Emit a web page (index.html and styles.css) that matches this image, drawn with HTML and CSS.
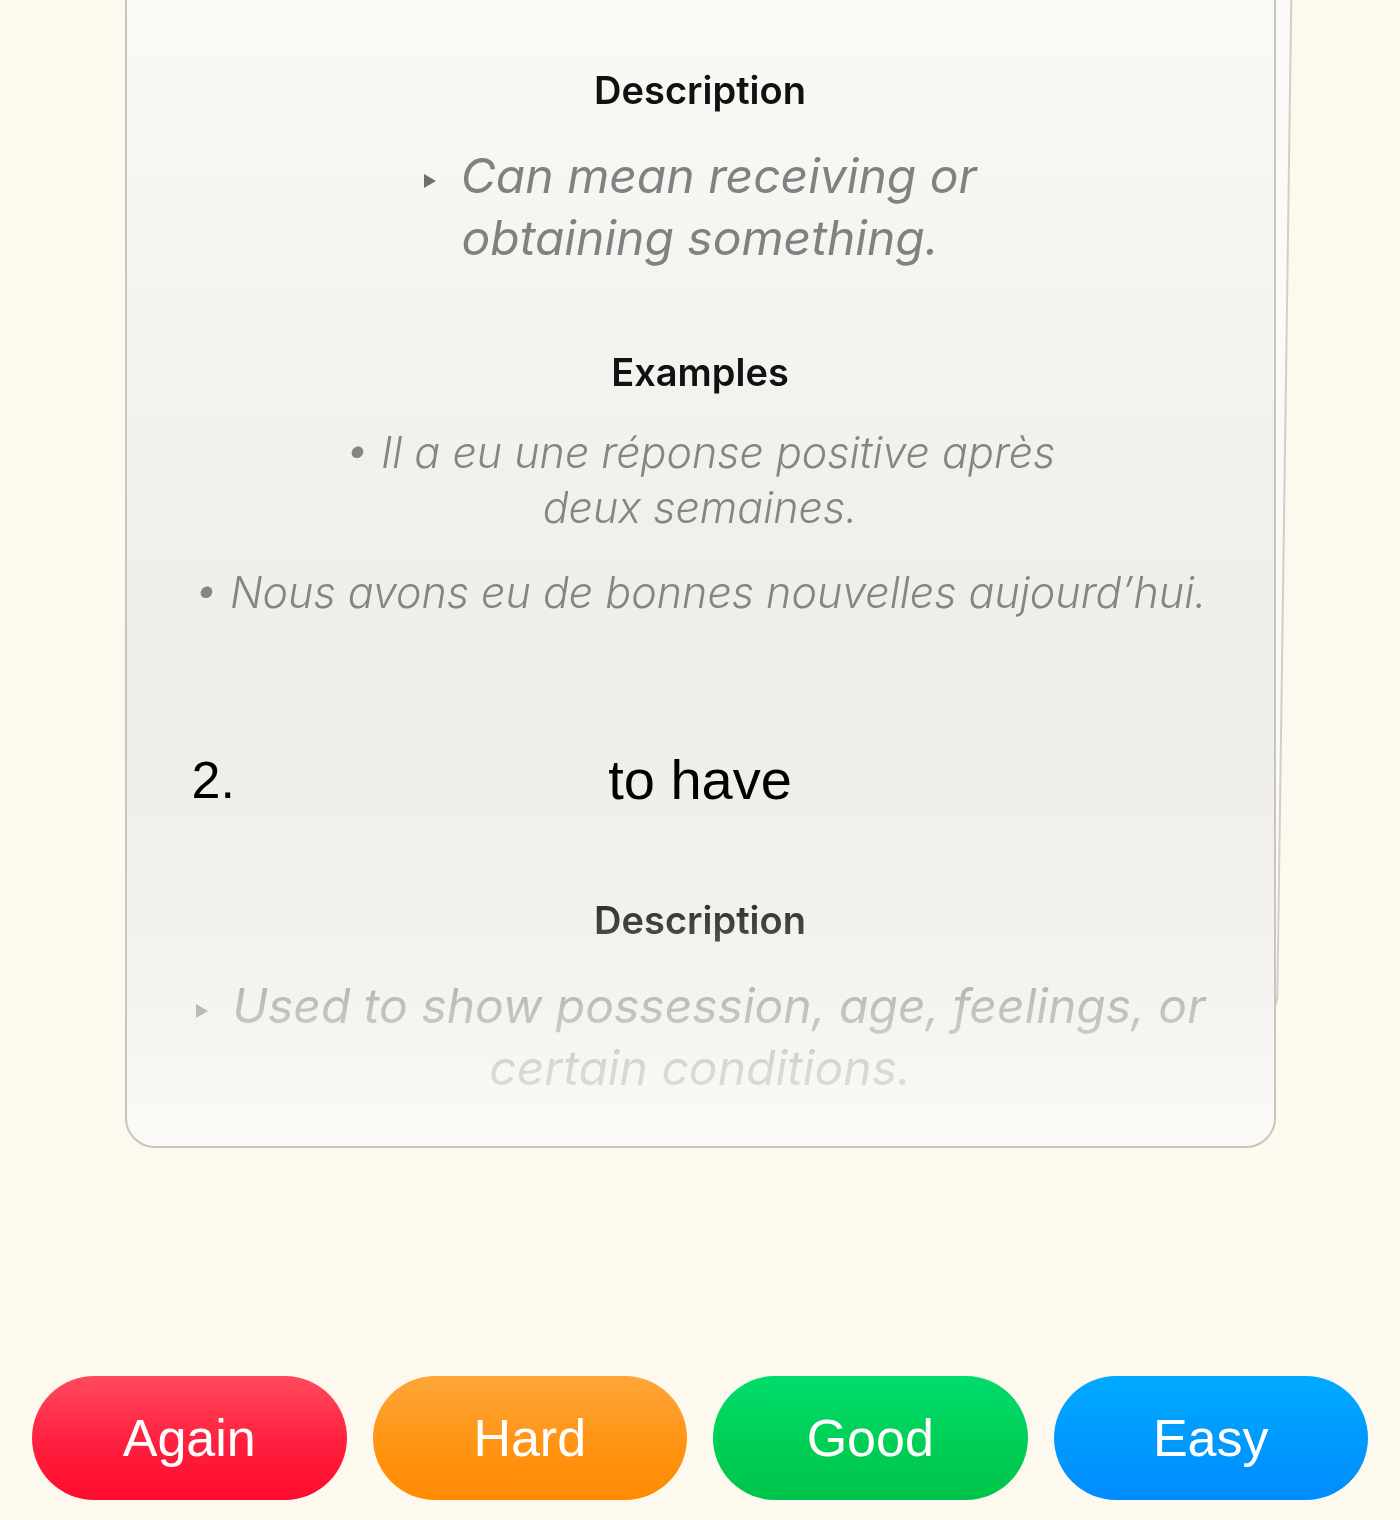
FILE: index.html
```html
<!DOCTYPE html>
<html lang="fr">
<head>
  <meta charset="UTF-8" />
  <meta name="viewport" content="width=device-width, initial-scale=1" />
  <title>Révision - avoir</title>
  <link rel="stylesheet" href="styles.css">
</head>
<body>

<div class="deck">
  <div class="card-back"></div>
  <div class="card">
    <div class="card-body">
      <h3>Description</h3>
      <p class="desc">
        <svg class="arrow" width="14" height="16" viewBox="0 0 14 16"><path d="M1 1 L13 8 L1 15 Z" /></svg>
        Can mean receiving or<br>obtaining something.
      </p>

      <h3 class="gap-lg">Examples</h3>
      <p class="example">• Il a eu une réponse positive après<br>deux semaines.</p>
      <p class="example">• Nous avons eu de bonnes nouvelles aujourd’hui.</p>

      <div class="meaning">
        <span class="num">2.</span>
        <span class="word">to have</span>
      </div>

      <h3>Description</h3>
      <p class="desc">
        <svg class="arrow" width="14" height="16" viewBox="0 0 14 16"><path d="M1 1 L13 8 L1 15 Z" /></svg>
        Used to show possession, age, feelings, or<br>certain conditions.
      </p>
    </div>
  </div>
</div>

<div class="answers">
  <button class="btn again">Again</button>
  <button class="btn hard">Hard</button>
  <button class="btn good">Good</button>
  <button class="btn easy">Easy</button>
</div>

</body>
</html>
```

FILE: styles.css
```css
body {
  margin: 0;
  background: #fdf9ee;
  font-family: Inter, "Noto Sans", sans-serif;
  color: #111;
  height: 1520px;
  overflow: hidden;
}
.deck {
  position: relative;
  width: 1151px;
  margin: -40px auto 0;
}
/* second card peeking out behind the current one */
.card-back {
  position: absolute;
  top: -20px;
  left: 30px;
  width: 1134px;
  height: 1065px;
  border: 2px solid #d2cfc9;
  border-radius: 30px;
  background: #fbfaf6;
  transform: rotate(0.8deg);
  transform-origin: left top;
}
.card {
  position: relative;
  box-sizing: border-box;
  height: 1188px;
  border: 2px solid #c8c5bf;
  border-radius: 30px;
  background: linear-gradient(180deg, #fbfaf6 0%, #f3f2ee 35%, #eeede8 62%, #f3f2ee 85%, #fbfaf6 100%);
  overflow: hidden;
}
.card-body {
  padding: 108px 20px 0;
  text-align: center;
  white-space: nowrap;
  -webkit-mask-image: linear-gradient(180deg, #000 0, #000 900px, rgba(0,0,0,0.78) 965px, rgba(0,0,0,0.45) 1045px, rgba(0,0,0,0.25) 1110px);
  mask-image: linear-gradient(180deg, #000 0, #000 900px, rgba(0,0,0,0.78) 965px, rgba(0,0,0,0.45) 1045px, rgba(0,0,0,0.25) 1110px);
}
h3 {
  margin: 0;
  font-size: 38px;
  line-height: 40px;
  font-weight: 600;
  color: #111;
}
.gap-lg {
  margin-top: 83px;
}
.desc {
  margin: 35px 0 0;
  font-style: italic;
  font-size: 48px;
  line-height: 62px;
  color: #818181;
}
.arrow {
  fill: #6f6f6f;
  margin-right: 10px;
  vertical-align: 4px;
}
.example {
  margin: 33px 0 0;
  font-style: italic;
  font-weight: 300;
  font-size: 43px;
  line-height: 55px;
  color: #858585;
}
.example + .example {
  margin-top: 30px;
}
.meaning {
  display: flex;
  align-items: center;
  margin: 128px 0 88px;
  font-family: "Liberation Sans", Arial, sans-serif;
  line-height: 64px;
  color: #000;
}
.num {
  width: 170px;
  text-align: left;
  margin-left: 45px;
  font-size: 52px;
}
.word {
  flex: 1;
  margin-right: 215px;
  font-size: 56px;
}
.answers {
  display: flex;
  gap: 26px;
  padding: 0 32px;
  margin-top: 228px;
}
.btn {
  flex: 1;
  height: 124px;
  border: none;
  border-radius: 62px;
  font-family: "Liberation Sans", Arial, sans-serif;
  font-size: 52px;
  color: white;
  cursor: pointer;
}
.again {
  background: linear-gradient(180deg, #ff4a5c 0%, #ff1f3e 55%, #ff0a2e 100%);
}
.hard {
  background: linear-gradient(180deg, #ffa53a 0%, #ff9414 55%, #ff8a00 100%);
}
.good {
  background: linear-gradient(180deg, #00dc6c 0%, #00cf55 55%, #00c44a 100%);
}
.easy {
  background: linear-gradient(180deg, #00aaff 0%, #0099ff 55%, #008cff 100%);
}
.btn:hover {
  opacity: 0.9;
}
```
